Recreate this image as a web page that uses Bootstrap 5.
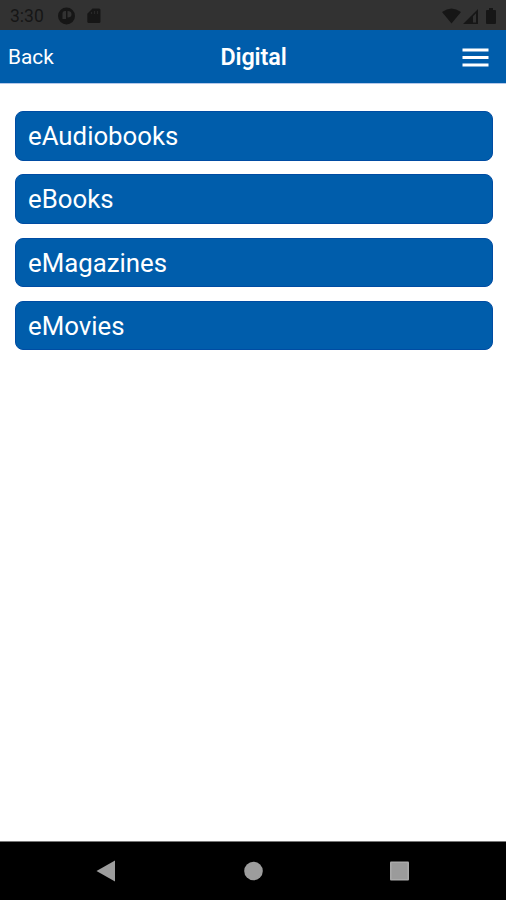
<!DOCTYPE html>
<html lang="en">
<head>
<meta charset="utf-8">
<meta name="viewport" content="width=device-width, initial-scale=1">
<title>Digital</title>
<link href="https://cdn.jsdelivr.net/npm/bootstrap@5.3.0/dist/css/bootstrap.min.css" rel="stylesheet">
<style>
body { font-family: Roboto, "Liberation Sans", sans-serif; }
.status-bar { height: 30px; background: #323232; color: #161616; font-size: 17.5px; line-height: 32px; padding: 1px 8px 0 10px; }
.status-bar svg, .app-header svg, .system-nav svg { display: block; }
.status-time { width: 47px; }
.app-header { height: 54px; background: #005dab; border-bottom: 1px solid #b4c8ea; padding: 2px 7px 0 8px; }
.app-header .col { line-height: 1; }
.menu-toggle { margin-right: 10px; }
.back-link { font-size: 20.8px; }
.page-title { font-size: 23.3px; font-weight: 600; line-height: 1; letter-spacing: -.1px; }
.menu-list { padding: 27px 13.5px 0 15px; gap: 13.8px; }
.menu-list .btn { height: 49.5px; border: 1px solid #004ca3; border-radius: 8px; background: #005dab; color: #fff; font-size: 25.8px; line-height: 48px; padding: 0 12px; }
.system-nav { height: 59px; background: #000; border-top: 1px solid #777; padding: 0 96px; }
</style>
</head>
<body class="bg-white">
<div class="d-flex flex-column vh-100 overflow-hidden">
  <div class="status-bar d-flex align-items-center flex-shrink-0">
    <span class="status-time">3:30</span>
    <svg width="46" height="18" viewBox="0 0 46 18" fill="#161616">
      <circle cx="9.500" cy="9" r="8.500"/>
      <path d="M5.500 12V6.500q0-2.500 2.500-2.500H9v8zM10.500 4q4 0 4 3.200t-4 3.200z" fill="#323232"/>
      <path d="M35.500 1.500H42q1.500 0 1.500 1.500V14.500q0 1.500-1.500 1.500H31.800q-1.500 0-1.500-1.500V6.700z"/>
      <path d="M34.500 5v2M37.500 4v3M40.500 4v3" stroke="#282828" stroke-width="1.200"/>
    </svg>
    <svg class="ms-auto" width="56" height="18" viewBox="0 0 56 18" fill="#161616">
      <path d="M0 5Q9.500-2 19 5L9.500 16.500z"/>
      <path fill-rule="evenodd" d="M21 17L36 2v15zM31 9.300V15.500h3V6.200z"/>
      <path d="M47 1h4v2h2q1 0 1 1v12q0 1-1 1h-8q-1 0-1-1v-12q0-1 1-1h2z"/>
    </svg>
  </div>
  <header class="app-header text-white flex-shrink-0">
    <div class="row g-0 align-items-center h-100">
      <div class="col"><a class="back-link text-white text-decoration-none" href="#">Back</a></div>
      <h1 class="page-title col-auto mb-0">Digital</h1>
      <div class="col d-flex justify-content-end">
        <button class="menu-toggle btn p-0 border-0" type="button" aria-label="Menu">
          <svg width="27" height="20" viewBox="0 0 27 20"><path d="M.5 2h26M.5 9.500h26M.5 17h26" stroke="#fff" stroke-width="3"/></svg>
        </button>
      </div>
    </div>
  </header>
  <main class="menu-list d-flex flex-column flex-grow-1">
    <a class="btn text-start" href="#">eAudiobooks</a>
    <a class="btn text-start" href="#">eBooks</a>
    <a class="btn text-start" href="#">eMagazines</a>
    <a class="btn text-start" href="#">eMovies</a>
  </main>
  <nav class="system-nav d-flex justify-content-between align-items-center flex-shrink-0">
    <svg width="20" height="22" viewBox="0 0 20 22"><path d="M.5 11L19 .5v21z" fill="#9d9d9d"/></svg>
    <svg width="20" height="20" viewBox="0 0 20 20"><circle cx="10.500" cy="10" r="9.300" fill="#9d9d9d"/></svg>
    <svg width="20" height="20" viewBox="0 0 20 20"><rect width="19" height="19" y=".5" rx="1" fill="#aaa"/><rect x="1.500" y="2" width="16" height="16" fill="#9b9b9b"/></svg>
  </nav>
</div>
<script src="https://cdn.jsdelivr.net/npm/bootstrap@5.3.0/dist/js/bootstrap.bundle.min.js"></script>
</body>
</html>
